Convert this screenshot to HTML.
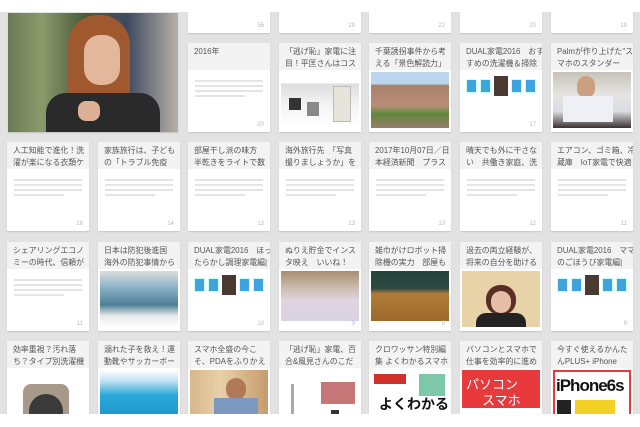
<!DOCTYPE html>
<html><head><meta charset="utf-8"><style>
*{margin:0;padding:0;box-sizing:border-box}
body{width:640px;height:427px;overflow:hidden;background:#fff;position:relative;font-family:"Liberation Sans","Noto Sans CJK JP",sans-serif}
#bg{position:absolute;left:0;top:12px;width:640px;height:402px;background:#e2e2e2;overflow:hidden}
.c{position:absolute;width:82px;height:89px;background:#fff;box-shadow:0 1px 1px rgba(0,0,0,.12)}
.t{height:27px;background:#f3f3f3;padding:3px 5px 0 6px;font-size:7.9px;line-height:12px;color:#555;overflow:hidden;white-space:nowrap}
.n{position:absolute;right:6px;bottom:4px;font-size:6px;color:#bbb}
.l{position:absolute;left:7px;width:68px;height:1.5px;background:#e4e4e4}
.im{position:absolute;left:2px;top:29px;width:78px;height:56px}
.ic{position:absolute;left:3px;top:32px;width:76px;height:22px;display:flex;gap:3px;align-items:center;padding-left:3px}
.ic i{display:block;width:11px;height:14px;background:#3fa4dd;border:1px solid #cfe}
.ic b{display:block;width:14px;height:20px;background:#4a3a32}
</style></head><body>
<div id="bg">
<div class="c" style="left:188px;top:-68px"><div class="n">56</div></div>
<div class="c" style="left:279px;top:-68px"><div class="n">29</div></div>
<div class="c" style="left:369px;top:-68px"><div class="n">22</div></div>
<div class="c" style="left:460px;top:-68px"><div class="n">20</div></div>
<div class="c" style="left:551px;top:-68px"><div class="n">19</div></div>
<div style="position:absolute;left:8px;top:1px;width:170px;height:119px;background:linear-gradient(90deg,#6c7a55 0%,#8a9a6a 20%,#4a5a3c 45%,#3e4a60 70%,#b8b0a8 100%);box-shadow:0 1px 1px rgba(0,0,0,.15)">
<div style="position:absolute;left:60px;top:2px;width:62px;height:85px;border-radius:30px 30px 10px 10px;background:#a0582e"></div>
<div style="position:absolute;left:76px;top:22px;width:36px;height:50px;border-radius:16px;background:#e2b79c"></div>
<div style="position:absolute;left:38px;top:80px;width:114px;height:39px;border-radius:20px 20px 0 0;background:#2a2a2a"></div>
<div style="position:absolute;left:70px;top:88px;width:22px;height:20px;border-radius:8px;background:#dcb196"></div>
</div>
<div class="c" style="left:188px;top:31px"><div class="t">2016年</div><div class="l" style="top:37px"></div><div class="l" style="top:42px"></div><div class="l" style="top:47px"></div><div class="l" style="top:52px;width:50px"></div><div class="n">20</div></div>
<div class="c" style="left:279px;top:31px"><div class="t">「逃げ恥」家電に注<br>目！平匡さんはコス</div><div class="im" style="background:linear-gradient(#fff 0,#fff 20%,#ddd 21%,#f4f4f4 60%,#fff 100%)"><div style="position:absolute;left:52px;top:14px;width:18px;height:36px;background:#e8e4da;border:1px solid #bbb"></div><div style="position:absolute;left:8px;top:26px;width:12px;height:12px;background:#333"></div><div style="position:absolute;left:26px;top:30px;width:12px;height:14px;background:#888"></div></div></div>
<div class="c" style="left:369px;top:31px"><div class="t">千葉誘拐事件から考<br>える「景色解読力」</div><div class="im" style="background:linear-gradient(180deg,#bcd5ee 0,#bcd5ee 22%,#a8826a 23%,#b98d78 60%,#5e8a3c 75%,#9c7c6c 100%)"></div></div>
<div class="c" style="left:460px;top:31px"><div class="t">DUAL家電2016　おす<br>すめの洗濯機＆掃除</div><div class="ic"><i></i><i></i><b></b><i></i><i></i></div><div class="n">17</div></div>
<div class="c" style="left:551px;top:31px"><div class="t">Palmが作り上げた"ス<br>マホのスタンダー</div><div class="im" style="background:linear-gradient(180deg,#c6c2b8 0,#e6e4e2 40%,#dcdde4 70%,#3a3430 100%)"><div style="position:absolute;left:24px;top:4px;width:18px;height:22px;border-radius:9px;background:#caa080"></div><div style="position:absolute;left:10px;top:24px;width:50px;height:26px;background:#eef0f6"></div></div></div>
<div class="c" style="left:7px;top:130px"><div class="t">人工知能で進化！洗<br>濯が楽になる衣類ケ</div><div class="l" style="top:37px"></div><div class="l" style="top:42px"></div><div class="l" style="top:47px"></div><div class="l" style="top:52px;width:50px"></div><div class="n">16</div></div>
<div class="c" style="left:98px;top:130px"><div class="t">家族旅行は、子ども<br>の「トラブル免疫</div><div class="l" style="top:37px"></div><div class="l" style="top:42px"></div><div class="l" style="top:47px"></div><div class="l" style="top:52px;width:50px"></div><div class="n">14</div></div>
<div class="c" style="left:188px;top:130px"><div class="t">部屋干し派の味方<br>半乾きをライトで数</div><div class="l" style="top:37px"></div><div class="l" style="top:42px"></div><div class="l" style="top:47px"></div><div class="l" style="top:52px;width:50px"></div><div class="n">13</div></div>
<div class="c" style="left:279px;top:130px"><div class="t">海外旅行先　「写真<br>撮りましょうか」を</div><div class="l" style="top:37px"></div><div class="l" style="top:42px"></div><div class="l" style="top:47px"></div><div class="l" style="top:52px;width:50px"></div><div class="n">13</div></div>
<div class="c" style="left:369px;top:130px"><div class="t">2017年10月07日／日<br>本経済新聞　プラス</div><div class="l" style="top:37px"></div><div class="l" style="top:42px"></div><div class="l" style="top:47px"></div><div class="l" style="top:52px;width:50px"></div><div class="n">13</div></div>
<div class="c" style="left:460px;top:130px"><div class="t">晴天でも外に干さな<br>い　共働き家庭、洗</div><div class="l" style="top:37px"></div><div class="l" style="top:42px"></div><div class="l" style="top:47px"></div><div class="l" style="top:52px;width:50px"></div><div class="n">12</div></div>
<div class="c" style="left:551px;top:130px"><div class="t">エアコン、ゴミ箱、冷<br>蔵庫　IoT家電で快適</div><div class="l" style="top:37px"></div><div class="l" style="top:42px"></div><div class="l" style="top:47px"></div><div class="l" style="top:52px;width:50px"></div><div class="n">11</div></div>
<div class="c" style="left:7px;top:230px"><div class="t">シェアリングエコノ<br>ミーの時代、信頼が</div><div class="l" style="top:37px"></div><div class="l" style="top:42px"></div><div class="l" style="top:47px"></div><div class="l" style="top:52px;width:50px"></div><div class="n">11</div></div>
<div class="c" style="left:98px;top:230px"><div class="t">日本は防犯後進国<br>海外の防犯事情から</div><div class="im" style="background:linear-gradient(180deg,#ddd 0,#8ab0c8 30%,#4f7f98 60%,#e8e8e8 80%,#fff 100%)"></div></div>
<div class="c" style="left:188px;top:230px"><div class="t">DUAL家電2016　ほっ<br>たらかし調理家電編|</div><div class="ic"><i></i><i></i><b></b><i></i><i></i></div><div class="n">10</div></div>
<div class="c" style="left:279px;top:230px"><div class="t">ぬりえ貯金でインス<br>タ映え　いいね！</div><div class="im" style="height:50px;background:linear-gradient(180deg,#a88e70 0,#c8b8a8 30%,#e0d4e0 60%,#d8d2e4 100%)"></div><div class="n">9</div></div>
<div class="c" style="left:369px;top:230px"><div class="t">雑巾がけロボット掃<br>除機の実力　部屋も</div><div class="im" style="height:50px;background:linear-gradient(180deg,#27423c 0,#2c4a42 35%,#b07c38 45%,#9c6a2c 100%)"></div><div class="n">9</div></div>
<div class="c" style="left:460px;top:230px"><div class="t">過去の両立経験が、<br>将来の自分を助ける</div><div class="im" style="background:#e8d2a8"><div style="position:absolute;left:24px;top:14px;width:30px;height:30px;border-radius:14px;background:#5a2e28"></div><div style="position:absolute;left:29px;top:20px;width:20px;height:22px;border-radius:10px;background:#e6bfa6"></div><div style="position:absolute;left:14px;top:42px;width:50px;height:14px;border-radius:10px 10px 0 0;background:#222"></div></div></div>
<div class="c" style="left:551px;top:230px"><div class="t">DUAL家電2016　ママ<br>のごほうび家電編|</div><div class="ic"><i></i><i></i><b></b><i></i><i></i></div><div class="n">9</div></div>
<div class="c" style="left:7px;top:329px"><div class="t">効率重視？汚れ落<br>ち？タイプ別洗濯機</div><div class="im" style="background:#fff"><div style="position:absolute;left:14px;top:14px;width:46px;height:50px;border-radius:8px;background:#a89a88"></div><div style="position:absolute;left:20px;top:24px;width:34px;height:34px;border-radius:17px;background:#3a3a3a"></div></div></div>
<div class="c" style="left:98px;top:329px"><div class="t">溺れた子を救え！運<br>動靴やサッカーボー</div><div class="im" style="background:linear-gradient(180deg,#fff 0,#bfe0f2 20%,#2aa8d8 45%,#1a90c8 100%)"></div></div>
<div class="c" style="left:188px;top:329px"><div class="t">スマホ全盛の今こ<br>そ、PDAをふりかえ</div><div class="im" style="background:linear-gradient(90deg,#d8b88c 0,#e8d0a8 40%,#c69a6c 100%)"><div style="position:absolute;left:36px;top:8px;width:20px;height:22px;border-radius:10px;background:#b07a58"></div><div style="position:absolute;left:24px;top:28px;width:44px;height:30px;background:#7b98c0"></div></div></div>
<div class="c" style="left:279px;top:329px"><div class="t">「逃げ恥」家電、百<br>合&amp;風見さんのこだ</div><div class="im" style="background:#fff"><div style="position:absolute;left:40px;top:12px;width:34px;height:22px;background:#c67878"></div><div style="position:absolute;left:10px;top:14px;width:3px;height:40px;background:#aaa"></div><div style="position:absolute;left:50px;top:40px;width:8px;height:18px;background:#333"></div></div></div>
<div class="c" style="left:369px;top:329px"><div class="t">クロワッサン特別編<br>集 よくわかるスマホ</div><div class="im" style="background:#fff"><div style="position:absolute;left:3px;top:4px;width:32px;height:10px;background:#d2302a"></div><div style="position:absolute;left:48px;top:4px;width:26px;height:22px;background:#7cc8a8"></div><div style="position:absolute;left:8px;top:24px;font-size:14px;font-weight:bold;color:#111;white-space:nowrap">よくわかる</div></div></div>
<div class="c" style="left:460px;top:329px"><div class="t">パソコンとスマホで<br>仕事を効率的に進め</div><div class="im" style="background:#e83a3c"><div style="position:absolute;left:4px;top:4px;font-size:13px;color:#fff;white-space:nowrap">パソコン</div><div style="position:absolute;left:20px;top:20px;font-size:13px;color:#fff">スマホ</div><div style="position:absolute;left:0;top:38px;width:78px;height:18px;background:#fff"></div></div></div>
<div class="c" style="left:551px;top:329px"><div class="t">今すぐ使えるかんた<br>んPLUS+ iPhone</div><div class="im" style="background:#fff;border:2px solid #e83a3c"><div style="position:absolute;left:1px;top:4px;font-size:17px;font-weight:bold;color:#111;letter-spacing:-1px;white-space:nowrap">iPhone6s</div><div style="position:absolute;left:20px;top:28px;width:40px;height:20px;background:#f2d024"></div><div style="position:absolute;left:2px;top:28px;width:14px;height:24px;background:#222"></div></div></div>
</div>
</body></html>
